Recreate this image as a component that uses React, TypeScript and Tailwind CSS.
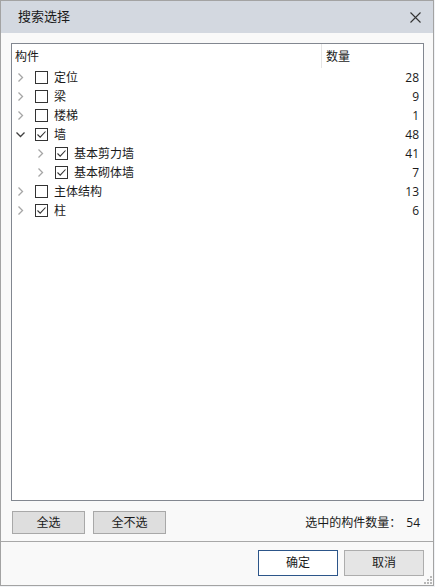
import React from 'react';

type Node = {
  label: string;
  count: number;
  checked: boolean;
  expanded?: boolean;
  children?: Node[];
};

const TREE: Node[] = [
  { label: '定位', count: 28, checked: false },
  { label: '梁', count: 9, checked: false },
  { label: '楼梯', count: 1, checked: false },
  {
    label: '墙',
    count: 48,
    checked: true,
    expanded: true,
    children: [
      { label: '基本剪力墙', count: 41, checked: true },
      { label: '基本砌体墙', count: 7, checked: true },
    ],
  },
  { label: '主体结构', count: 13, checked: false },
  { label: '柱', count: 6, checked: true },
];

function Chevron({ open }: { open?: boolean }) {
  if (open) {
    return (
      <svg width="9" height="9" viewBox="0 0 9 9" className="shrink-0">
        <path d="M0.5 2.5 L4.5 6.5 L8.5 2.5" fill="none" stroke="#404040" strokeWidth="1.3" />
      </svg>
    );
  }
  return (
    <svg width="9" height="9" viewBox="0 0 9 9" className="shrink-0">
      <path d="M2.5 0.5 L6.5 4.5 L2.5 8.5" fill="none" stroke="#a6a6a6" strokeWidth="1.3" />
    </svg>
  );
}

function CheckBox({ checked }: { checked: boolean }) {
  return (
    <div className="w-[13px] h-[13px] border border-[#333333] bg-white flex items-center justify-center shrink-0">
      {checked && (
        <svg width="11" height="11" viewBox="0 0 11 11">
          <path d="M1.5 5.5 L4.2 8.2 L9.5 2.5" fill="none" stroke="#333333" strokeWidth="1.1" />
        </svg>
      )}
    </div>
  );
}

function Row({ node, depth }: { node: Node; depth: number }) {
  return (
    <>
      <div className="h-[19px] flex items-center pr-[4px]">
        <div className={depth ? 'w-[24px] shrink-0' : 'w-[4px] shrink-0'} />
        <Chevron open={node.expanded} />
        <div className="w-[10px] shrink-0" />
        <CheckBox checked={node.checked} />
        <span className="ml-[6px] text-[12px] leading-[19px] text-[#1a1a1a]">{node.label}</span>
        <span className="ml-auto text-[12px] leading-[19px] text-[#1a1a1a]">{node.count}</span>
      </div>
      {node.expanded && node.children?.map((c) => <Row key={c.label} node={c} depth={depth + 1} />)}
    </>
  );
}

export default function App() {
  return (
    <div
      className="w-[435px] h-[587px] bg-[#f0f2f5] overflow-hidden"
      style={{ fontFamily: '"Open Sans", "Noto Sans CJK SC", sans-serif' }}
    >
      <div className="w-[434px] h-[586px] border border-[#a3a3a3] bg-[#f9f9f9] flex flex-col">
        {/* title bar */}
        <div className="h-[32px] bg-[#d3d8e0] flex items-center justify-between pl-[17px] pr-[12px] shrink-0">
          <span className="text-[13px] text-[#1a1a1a]">搜索选择</span>
          <svg width="11" height="11" viewBox="0 0 11 11">
            <path d="M0.5 0.5 L10.5 10.5 M10.5 0.5 L0.5 10.5" stroke="#333333" strokeWidth="1.1" />
          </svg>
        </div>

        {/* body */}
        <div className="pl-[10px] pt-[10px]">
          <div className="w-[413px] h-[458px] border border-[#828790] bg-white flex flex-col">
            <div className="h-[24px] flex text-[12px] text-[#1a1a1a] shrink-0">
              <div className="w-[310px] pl-[3px] pt-[4px] border-r border-[#e5e5e5]">构件</div>
              <div className="pl-[4px] pt-[4px]">数量</div>
            </div>
            {TREE.map((n) => (
              <Row key={n.label} node={n} depth={0} />
            ))}
          </div>

          <div className="mt-[10px] flex items-center w-[413px] h-[23px]">
            <button className="ml-[1px] w-[73px] h-[23px] bg-[#dedede] border border-[#a8a8a8] text-[12px] text-[#1a1a1a]">
              全选
            </button>
            <button className="ml-[8px] w-[73px] h-[23px] bg-[#dedede] border border-[#a8a8a8] text-[12px] text-[#1a1a1a]">
              全不选
            </button>
            <span className="ml-auto mr-[5px] text-[12px] text-[#1a1a1a]">选中的构件数量：</span>
            <span className="mr-[4px] text-[12px] text-[#1a1a1a]">54</span>
          </div>
        </div>

        {/* footer */}
        <div className="mt-[7px] border-t border-[#a8a8a8] flex-1 flex justify-end pt-[8px] pr-[9px] relative">
          <button className="w-[80px] h-[26px] bg-white border border-[#2c5589] text-[12px] text-[#1a1a1a]">
            确定
          </button>
          <button className="ml-[6px] w-[80px] h-[26px] bg-[#e5e5e5] border border-[#adadad] text-[12px] text-[#1a1a1a]">
            取消
          </button>
          <svg width="8" height="8" viewBox="0 0 8 8" className="absolute right-[1px] bottom-[1px]">
            <rect x="6" y="0" width="2" height="2" fill="#b8b8b8" />
            <rect x="3" y="3" width="2" height="2" fill="#b8b8b8" />
            <rect x="6" y="3" width="2" height="2" fill="#b8b8b8" />
            <rect x="0" y="6" width="2" height="2" fill="#b8b8b8" />
            <rect x="3" y="6" width="2" height="2" fill="#b8b8b8" />
            <rect x="6" y="6" width="2" height="2" fill="#b8b8b8" />
          </svg>
        </div>
      </div>
    </div>
  );
}
